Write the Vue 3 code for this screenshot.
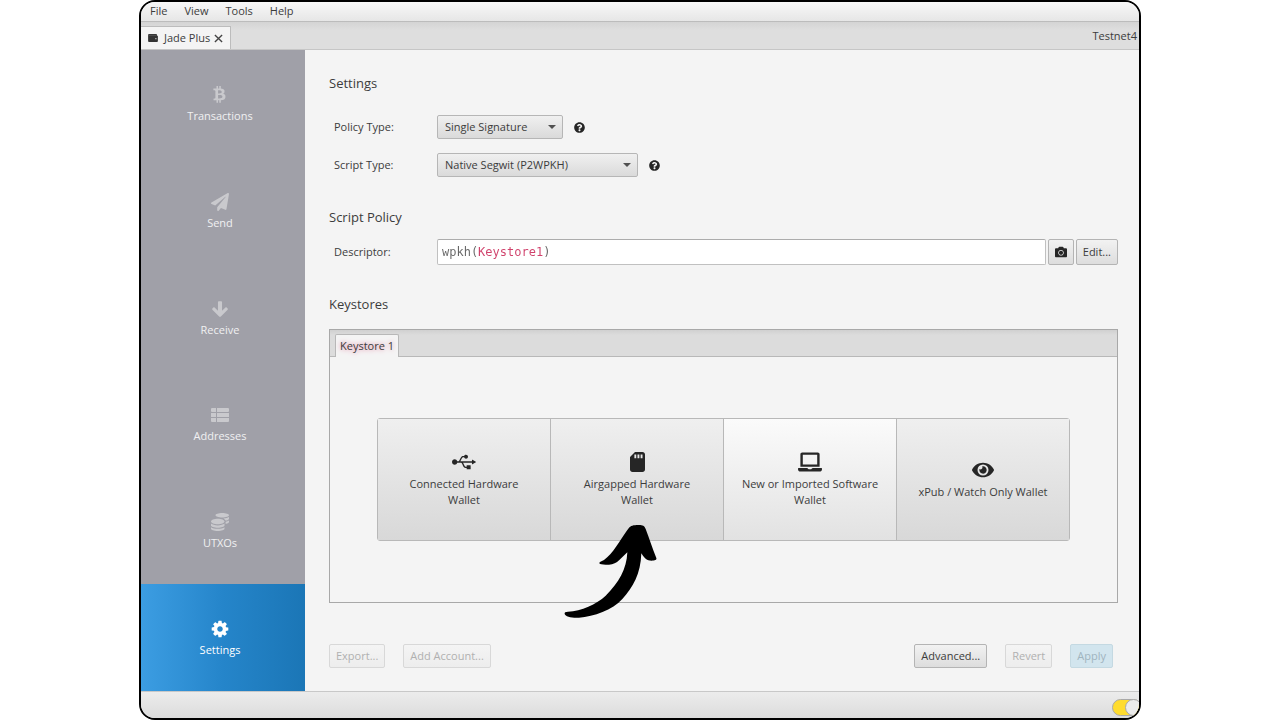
<template>
  <div class="page">
    <div class="window">
      <!-- MENU -->
      <nav class="menu-bar">
        <button v-for="m in menus" :key="m" type="button" class="menu">{{ m }}</button>
      </nav>

      <!-- WALLET TABS -->
      <div class="wallet-tabs">
        <div class="wallet-tab">
          <svg class="wallet-icon" viewBox="0 0 22 18">
            <path d="M2 0h16a2 2 0 0 1 2 2v2h2v12a2 2 0 0 1-2 2H2a2 2 0 0 1-2-2V2a2 2 0 0 1 2-2z" />
            <path d="M1 3h18" class="wallet-line" />
            <circle cx="17.500" cy="10.500" r="1.500" class="wallet-dot" />
          </svg>
          <span>Jade Plus</span>
          <button type="button" class="close" aria-label="Close">
            <svg viewBox="0 0 10 10"><path d="M1 1l8 8M9 1l-8 8" /></svg>
          </button>
        </div>
        <span class="network">Testnet4</span>
      </div>

      <div class="body">
        <!-- SIDEBAR -->
        <aside class="sidebar">
          <button
            v-for="item in sections"
            :key="item.label"
            type="button"
            class="section"
            :class="{ active: item.label === current }"
            @click="current = item.label"
          >
            <svg class="section-icon" :viewBox="item.box"><path :d="item.path" /></svg>
            <span>{{ item.label }}</span>
          </button>
        </aside>

        <!-- SETTINGS -->
        <main class="content">
          <h2>Settings</h2>
          <div class="row first">
            <label for="policy">Policy Type:</label>
            <div class="combo policy">
              <select id="policy" v-model="policy">
                <option>Single Signature</option>
                <option>Multi Signature</option>
              </select>
            </div>
            <svg class="help" viewBox="0 0 512 512"><path :d="helpPath" /></svg>
          </div>
          <div class="row second">
            <label for="script">Script Type:</label>
            <div class="combo script">
              <select id="script" v-model="script">
                <option>Native Segwit (P2WPKH)</option>
                <option>Taproot (P2TR)</option>
              </select>
            </div>
            <svg class="help" viewBox="0 0 512 512"><path :d="helpPath" /></svg>
          </div>

          <h2>Script Policy</h2>
          <div class="row descriptor">
            <label for="descriptor">Descriptor:</label>
            <div class="field">
              <input id="descriptor" v-model="descriptor" type="text" spellcheck="false" />
            </div>
            <button type="button" class="btn tall camera" aria-label="Scan">
              <svg viewBox="0 0 512 512"><path :d="cameraPath" /></svg>
            </button>
            <button type="button" class="btn tall">Edit...</button>
          </div>

          <h2>Keystores</h2>
          <section class="keystores">
            <div class="keystore-tabs">
              <button type="button" class="keystore-tab">Keystore 1</button>
            </div>
            <div class="keystore-body">
              <div class="sources">
                <div v-for="s in sources" :key="s.label" class="source-cell">
                  <button type="button" class="source" :class="{ light: s.light }">
                    <svg :class="s.icon" :viewBox="s.box"><path :d="s.path" /></svg>
                    <span>{{ s.label }}</span>
                  </button>
                  <svg v-if="s.pointer" class="pointer" viewBox="40 40 282 285">
                    <path
                      d="M42 310C41 305 44 303 52 303C92 301 137 281 165 255C204 217 228 175 230 125L206 148C197 157 188 161 175 162C160 163 148 162 146 158C145 154 151 153 160 148C187 129 206 92 230 58C238 46 244 44 258 43C273 42 281 43 285 55C296 84 304 110 317 142C319 149 312 149 303 150C288 150 283 145 272 128C270 190 247 230 215 265C185 298 130 318 85 321C62 322 44 318 42 310Z"
                    />
                  </svg>
                </div>
              </div>
            </div>
          </section>

          <div class="actions">
            <button type="button" class="btn" disabled>Export...</button>
            <button type="button" class="btn" disabled>Add Account...</button>
            <span class="spacer"></span>
            <button type="button" class="btn">Advanced...</button>
            <button type="button" class="btn" disabled>Revert</button>
            <button type="button" class="btn apply" disabled>Apply</button>
          </div>
        </main>
      </div>

      <!-- STATUS -->
      <footer class="status-bar">
        <input v-model="connected" type="checkbox" role="switch" class="toggle" aria-label="Connected" />
      </footer>
    </div>
  </div>
</template>

<script setup>
import { ref } from "vue";

const menus = ["File", "View", "Tools", "Help"];
const current = ref("Settings");
const policy = ref("Single Signature");
const script = ref("Native Segwit (P2WPKH)");
const descriptor = ref("wpkh(Keystore1)");
const connected = ref(true);

const sections = [
  {
    label: "Transactions",
    box: "-40 0 1792 1792",
    path: "M1309 519q18 182-131 258 117 28 175 103t45 214q-7 71-32.500 125t-64.500 89-97 58.500-121.500 34.500-145.500 15v255h-154v-251q-80 0-122-1v252h-154v-255q-18 0-54-.5t-55-.5h-200l31-183h111q50 0 58-51v-402h16q-6-1-16-1v-287q-13-68-89-68h-111v-164l212 1q64 0 97-1v-252h154v247q82-2 122-2v-245h154v252q79 7 140 22.500t113 45 82.500 78 36.500 114.500zm-215 545q0-36-15-64t-37-46-57.500-30.500-65.500-18.500-74-9-69-3-64.500 1-47.500 1v338q8 0 37 .5t48 .5 53-1.500 58.500-4 57-8.500 55.500-14 47.500-21 39.500-30 24.500-40 9.500-51zm-71-476q0-33-12.500-58.500t-30.500-42-48-28-55-16.500-61.500-8-58-2.500-54 1-39.500.5v307q5 0 34.500.5t46.500 0 50-2 55-5.500 51.500-11 48.500-18.500 37-27 27-38.500 9-51z",
  },
  {
    label: "Send",
    box: "0 0 512 512",
    path: "M476 3.200L12.500 270.600c-18.100 10.400-15.800 35.600 2.200 43.200L121 358.400l287.300-253.200c5.500-4.900 13.300 2.600 8.600 8.300L176 407v80.500c0 23.600 28.500 32.900 42.500 15.800L282 426l124.600 52.200c14.200 6 30.400-2.900 33-18.200l72-432C515 7.800 493.300-6.800 476 3.200z",
  },
  {
    label: "Receive",
    box: "-32 0 512 512",
    path: "M413 214l28 28c9 10 9 25 0 34L241 473c-9 9-25 9-34 0L7 276c-9-9-9-24 0-34l28-28c9-9 25-9 34 0L166 308V56c0-13 11-24 24-24h68c13 0 24 11 24 24v252l97-94c9-9 25-9 34 0z",
  },
  {
    label: "Addresses",
    box: "0 0 18 18",
    path: "M1 2h4v4H1a1 1 0 0 1-1-1V3a1 1 0 0 1 1-1zM6 2h11a1 1 0 0 1 1 1v2a1 1 0 0 1-1 1H6zM0 7h5v4H0zM6 7h12v4H6zM0 12h5v4H1a1 1 0 0 1-1-1zM6 12h12v3a1 1 0 0 1-1 1H6z",
  },
  {
    label: "UTXOs",
    box: "0 0 512 512",
    path: "M0 405.300V448c0 35.300 86 64 192 64s192-28.700 192-64v-42.700C342.700 434.400 267.200 448 192 448S41.300 434.400 0 405.300zM320 128c106 0 192-28.700 192-64S426 0 320 0 128 28.700 128 64s86 64 192 64zM0 300.400V352c0 35.300 86 64 192 64s192-28.700 192-64v-51.600c-41.300 34-116.900 51.600-192 51.600S41.300 334.400 0 300.400zm416 11c57.300-11.100 96-31.700 96-55.400v-42.700c-23.200 16.400-57.300 27.600-96 34.500v63.600zM192 160C86 160 0 195.800 0 240s86 80 192 80 192-35.800 192-80-86-80-192-80zm219.300 56.300c60-10.800 100.700-32 100.700-56.300v-42.700c-35.500 25.100-96.500 38.600-160.700 41.800 29.500 14.300 51.200 33.500 60 57.200z",
  },
  {
    label: "Settings",
    box: "-64 64 1664 1664",
    path: "M1024 896q0-106-75-181t-181-75-181 75-75 181 75 181 181 75 181-75 75-181zm512-109v222q0 12-8 23t-20 13l-185 28q-19 54-39 91 35 50 107 138 10 12 10 25t-9 23q-27 37-99 108t-94 71q-12 0-26-9l-138-108q-44 23-91 38-16 136-29 186-7 28-36 28h-222q-14 0-24.500-8.500t-11.500-21.500l-28-184q-49-16-90-37l-141 107q-10 9-25 9-14 0-25-11-126-114-165-168-7-10-7-23 0-12 8-23 15-21 51-66.500t54-70.500q-27-50-41-99l-183-27q-13-2-21-12.500t-8-23.500v-222q0-12 8-23t19-13l186-28q14-46 39-92-40-57-107-138-10-12-10-24 0-10 9-23 26-36 98.500-107.500t94.500-71.500q13 0 26 10l138 107q44-23 91-38 16-136 29-186 7-28 36-28h222q14 0 24.500 8.500t11.500 21.500l28 184q49 16 90 37l142-107q9-9 24-9 13 0 25 10 129 119 165 170 7 8 7 22 0 12-8 23-15 21-51 66.500t-54 70.500q26 50 41 98l183 28q13 2 21 12.500t8 23.500z",
  },
];

const sources = [
  {
    label: "Connected Hardware Wallet",
    icon: "usb",
    box: "0 0 642 512",
    path: "M641.500 256c0 3.100-1.700 6.100-4.500 7.500L547.900 317c-1.400.8-2.800 1.400-4.500 1.400-1.400 0-3.100-.3-4.500-1.100-2.800-1.700-4.500-4.500-4.500-7.800v-35.600H295.700c25.300 39.600 40.500 106.900 69.600 106.900H392V354c0-5 3.900-8.900 8.900-8.900H490c5 0 8.900 3.900 8.900 8.900v89.100c0 5-3.900 8.900-8.900 8.900h-89.100c-5 0-8.900-3.900-8.900-8.900v-26.700h-26.700c-75.400 0-81.100-142.500-124.700-142.500H140.300c-8.100 30.600-35.900 53.500-69 53.500C32 327.300 0 295.300 0 256s32-71.300 71.300-71.300c33.100 0 61 22.800 69 53.500 39.100 0 43.900 9.500 74.600-60.400C255 88.700 273 95.700 323.800 95.700c7.500-20.900 27-35.600 50.400-35.600 29.500 0 53.500 23.900 53.500 53.500s-23.900 53.500-53.500 53.500c-23.400 0-42.900-14.800-50.400-35.600H294c-29.100 0-44.300 67.400-69.600 106.900h310.100v-35.600c0-3.300 1.700-6.100 4.500-7.800 2.800-1.700 6.400-1.400 8.900.3l89.100 53.500c2.800 1.100 4.500 4.100 4.500 7.200z",
  },
  {
    label: "Airgapped Hardware Wallet",
    icon: "sd",
    pointer: true,
    box: "0 0 384 512",
    path: "M320 0H128L0 128v320c0 35.300 28.700 64 64 64h256c35.300 0 64-28.700 64-64V64c0-35.300-28.700-64-64-64zM160 160h-48V64h48v96zm80 0h-48V64h48v96zm80 0h-48V64h48v96z",
  },
  {
    label: "New or Imported Software Wallet",
    icon: "laptop",
    light: true,
    box: "0 0 640 512",
    path: "M624 416H381.540c-.74 19.810-14.710 32-32.740 32H288c-18.690 0-33.020-17.470-32.770-32H16c-8.800 0-16 7.200-16 16v16c0 35.200 28.800 64 64 64h512c35.200 0 64-28.800 64-64v-16c0-8.800-7.200-16-16-16zM576 48c0-26.400-21.600-48-48-48H112C85.600 0 64 21.600 64 48v336h512V48zm-64 272H128V64h384v256z",
  },
  {
    label: "xPub / Watch Only Wallet",
    icon: "eye",
    box: "0 0 576 512",
    path: "M572.520 241.400C518.290 135.590 410.930 64 288 64S57.680 135.640 3.480 241.410a32.350 32.350 0 0 0 0 29.190C57.710 376.410 165.070 448 288 448s230.320-71.640 284.520-177.410a32.350 32.350 0 0 0 0-29.190zM288 400a144 144 0 1 1 144-144 143.930 143.930 0 0 1-144 144zm0-240a95.310 95.310 0 0 0-25.310 3.790 47.850 47.850 0 0 1-66.900 66.900A95.780 95.780 0 1 0 288 160z",
  },
];

const helpPath =
  "M504 256c0 136.997-111.043 248-248 248S8 392.997 8 256C8 119.083 119.043 8 256 8s248 111.083 248 248zM262.655 90c-54.497 0-89.255 22.957-116.549 63.758-3.536 5.286-2.353 12.415 2.715 16.258l34.699 26.310c5.205 3.947 12.621 3.008 16.665-2.122 17.864-22.658 30.113-35.797 57.303-35.797 20.429 0 45.698 13.148 45.698 32.958 0 14.976-12.363 22.667-32.534 33.976C247.128 238.528 216 254.941 216 296v4c0 6.627 5.373 12 12 12h56c6.627 0 12-5.373 12-12v-1.333c0-28.462 83.186-29.647 83.186-106.667 0-58.002-60.165-102-116.531-102zM256 338c-25.365 0-46 20.635-46 46 0 25.364 20.635 46 46 46s46-20.636 46-46c0-25.365-20.635-46-46-46z";
const cameraPath =
  "M512 144v288c0 26.500-21.500 48-48 48H48c-26.500 0-48-21.500-48-48V144c0-26.500 21.500-48 48-48h88l12.300-32.900c7-18.700 24.900-31.100 44.900-31.100h125.500c20 0 37.900 12.400 44.900 31.100L376 96h88c26.500 0 48 21.500 48 48zM376 288c0-66.200-53.800-120-120-120s-120 53.800-120 120 53.800 120 120 120 120-53.800 120-120zm-32 0c0 48.500-39.500 88-88 88s-88-39.500-88-88 39.500-88 88-88 88 39.500 88 88z";
</script>

<style>
body {
  background: #fff;
}
</style>

<style scoped>
.page {
  display: flex;
  justify-content: center;
  min-height: 100vh;
}

.window {
  flex: 1;
  max-width: 1002px;
  box-sizing: border-box;
  display: flex;
  flex-direction: column;
  border: 2px solid #000;
  border-radius: 16px;
  overflow: hidden;
  background: #f4f4f4;
  color: #3c3c3c;
  font-family: "Open Sans", "Noto Sans", sans-serif;
  font-size: 11px;
  line-height: 16px;
}

button,
select,
input {
  font: inherit;
  color: inherit;
  margin: 0;
  box-sizing: border-box;
}

/* MENU */
.menu-bar {
  display: flex;
  gap: 1px;
  padding: 0 1px 2px;
  background: linear-gradient(#f8f8f8, #e6e6e6);
  border-bottom: 1px solid #bcbcbc;
}

.menu {
  border: 0;
  background: none;
  padding: 0 8px;
  height: 17px;
}

/* WALLET TABS */
.wallet-tabs {
  display: flex;
  align-items: center;
  justify-content: space-between;
  height: 28px;
  box-sizing: border-box;
  padding-right: 2px;
  background: linear-gradient(#d4d4d4, #dedede 8px);
  border-bottom: 1px solid #c6c6c6;
}

.wallet-tab {
  align-self: flex-end;
  display: flex;
  align-items: center;
  height: 22px;
  padding: 0 7px 0 7px;
  background: #f4f4f4;
  border: 1px solid #bcbcbc;
  border-width: 1px 1px 0 0;
}

.wallet-icon {
  width: 10px;
  height: 8px;
  margin-right: 6px;
  fill: #333;
}

.wallet-line {
  stroke: #777;
}

.wallet-dot {
  fill: #ddd;
}

.close {
  border: 0;
  background: none;
  padding: 0;
  margin-left: 4px;
  display: flex;
}

.close svg {
  width: 9px;
  height: 9px;
  stroke: #444;
  stroke-width: 1.5;
}

.body {
  flex: 1;
  display: flex;
}

/* SIDEBAR */
.sidebar {
  flex: 0 0 164px;
  display: flex;
  flex-direction: column;
  background: #a0a0a8;
}

.section {
  flex: 1;
  display: flex;
  flex-direction: column;
  align-items: center;
  justify-content: center;
  gap: 4px;
  padding: 3px 6px 0 0;
  border: 0;
  background: none;
  color: #f0f0f2;
}

.section-icon {
  width: 18px;
  height: 18px;
  fill: #c9c9cd;
}

.section.active {
  background: linear-gradient(to right, #3c9de2, #2585ca 50%, #1b76b6);
  color: #fff;
}

.section.active .section-icon {
  fill: #fff;
}

/* CONTENT */
.content {
  flex: 1;
  min-width: 0;
  display: flex;
  flex-direction: column;
  padding: 23px 21px 23px 24px;
}

h2 {
  margin: 0;
  font-size: 13px;
  font-weight: 400;
  line-height: 20px;
}

.row {
  display: flex;
  align-items: center;
}

.row label {
  width: 103px;
  padding-left: 5px;
}

.row.first {
  margin-top: 22px;
}

.row.second {
  margin: 14px 0 30px;
}

.row.descriptor {
  gap: 2px;
  margin: 12px 0 29px;
}

.row.descriptor label {
  width: 101px;
}

.combo {
  position: relative;
}

.combo.policy {
  width: 126px;
}

.combo.script {
  width: 201px;
}

.combo select {
  appearance: none;
  display: block;
  width: 100%;
  height: 24px;
  padding: 0 24px 0 7px;
  border: 1px solid #b6b6b6;
  border-radius: 2px;
  background: linear-gradient(#f0f0f0, #dadada);
}

.combo::after {
  content: "";
  position: absolute;
  right: 7px;
  top: 10px;
  border: 4px solid transparent;
  border-top-color: #505050;
  border-bottom: 0;
  pointer-events: none;
}

.help {
  width: 11px;
  height: 11px;
  margin-left: 11px;
  fill: #262626;
}

.field {
  flex: 1;
  display: flex;
  height: 26px;
  box-sizing: border-box;
  border: 1px solid #c0c0c0;
  border-top-color: #acacac;
  border-radius: 2px;
  background: #fff;
}

/* key name is tinted by clipping a gradient to the text */
.field input {
  flex: 1;
  min-width: 0;
  padding: 0 0 0 4px;
  border: 0;
  outline: 0;
  font-family: "DejaVu Sans Mono", "Liberation Mono", monospace;
  font-size: 12px;
  color: #666;
  background: linear-gradient(to right, #666 5ch, #d0416b 5ch, #d0416b 14ch, #666 14ch);
  background-origin: content-box;
  background-clip: text;
  -webkit-background-clip: text;
  -webkit-text-fill-color: transparent;
}

/* BUTTONS */
.btn {
  height: 24px;
  padding: 0 6px;
  border: 1px solid #b4b4b4;
  border-radius: 2px;
  background: linear-gradient(#f2f2f2, #dddddd);
}

.btn.tall {
  height: 26px;
}

.btn.camera {
  display: flex;
  align-items: center;
  justify-content: center;
  width: 26px;
  padding: 0;
}

.camera svg {
  width: 12px;
  height: 12px;
  fill: #262626;
}

.btn:disabled {
  color: #b0b0b0;
  border-color: #d8d8d8;
  background: linear-gradient(#f4f4f4, #ededed);
}

.btn.apply:disabled {
  color: #a0b4be;
  border-color: #c4d9e2;
  background: #d2e5ee;
}

/* KEYSTORES */
.keystores {
  flex: 1;
  display: flex;
  flex-direction: column;
  margin-top: 15px;
  border: 1px solid #a8a8a8;
}

.keystore-tabs {
  display: flex;
  align-items: flex-end;
  height: 27px;
  box-sizing: border-box;
  padding-left: 5px;
  background: linear-gradient(#d0d0d0, #dcdcdc 5px);
  border-bottom: 1px solid #b8b8b8;
}

.keystore-tab {
  height: 23px;
  margin-bottom: -1px;
  padding: 0 4px;
  border: 1px solid #b8b8b8;
  border-bottom: 0;
  border-radius: 2px 2px 0 0;
  background: #f4f4f4;
  text-shadow: 0 0 5px #dc6a8e;
}

.keystore-body {
  flex: 1;
  display: flex;
  align-items: center;
  justify-content: center;
}

.sources {
  flex: 1;
  display: flex;
  max-width: 693px;
  box-sizing: border-box;
  height: 123px;
  border: 1px solid #b8b8b8;
  border-radius: 3px;
}

.source-cell {
  flex: 1;
  display: flex;
  position: relative;
}

.source-cell:not(:last-child) {
  border-right: 1px solid #b8b8b8;
}

.source {
  flex: 1;
  display: flex;
  flex-direction: column;
  align-items: center;
  justify-content: center;
  gap: 4px;
  padding: 0 16px;
  border: 0;
  background: linear-gradient(#efefef, #d8d8d8);
}

.source.light {
  background: linear-gradient(#fbfbfb, #e2e2e2);
}

.source svg {
  height: 20px;
  fill: #262626;
}

.source .usb {
  width: 24px;
}

.source .sd {
  width: 15px;
}

.source .laptop {
  width: 24px;
}

.source .eye {
  width: 22px;
}

.pointer {
  position: absolute;
  left: 13px;
  top: 105px;
  width: 94px;
  height: 95px;
  pointer-events: none;
}

/* ACTIONS */
.actions {
  display: flex;
  gap: 18px;
  margin-top: 41px;
  padding-right: 5px;
}

.spacer {
  flex: 1;
}

/* STATUS */
.status-bar {
  display: flex;
  align-items: center;
  justify-content: flex-end;
  height: 27px;
  box-sizing: border-box;
  padding-top: 5px;
  background: linear-gradient(#ececec, #dcdcdc);
  border-top: 1px solid #c8c8c8;
}

.toggle {
  appearance: none;
  display: flex;
  width: 30px;
  height: 17px;
  margin-right: -3px;
  border: 1px solid #a8a8a8;
  border-radius: 9px;
  background: #d0d0d0;
}

.toggle:checked {
  justify-content: flex-end;
  background: #ffdc2e;
}

.toggle::before {
  content: "";
  width: 17px;
  height: 17px;
  margin: -1px;
  box-sizing: border-box;
  border: 1px solid #a8a8a8;
  border-radius: 50%;
  background: #ebebeb;
}
</style>
